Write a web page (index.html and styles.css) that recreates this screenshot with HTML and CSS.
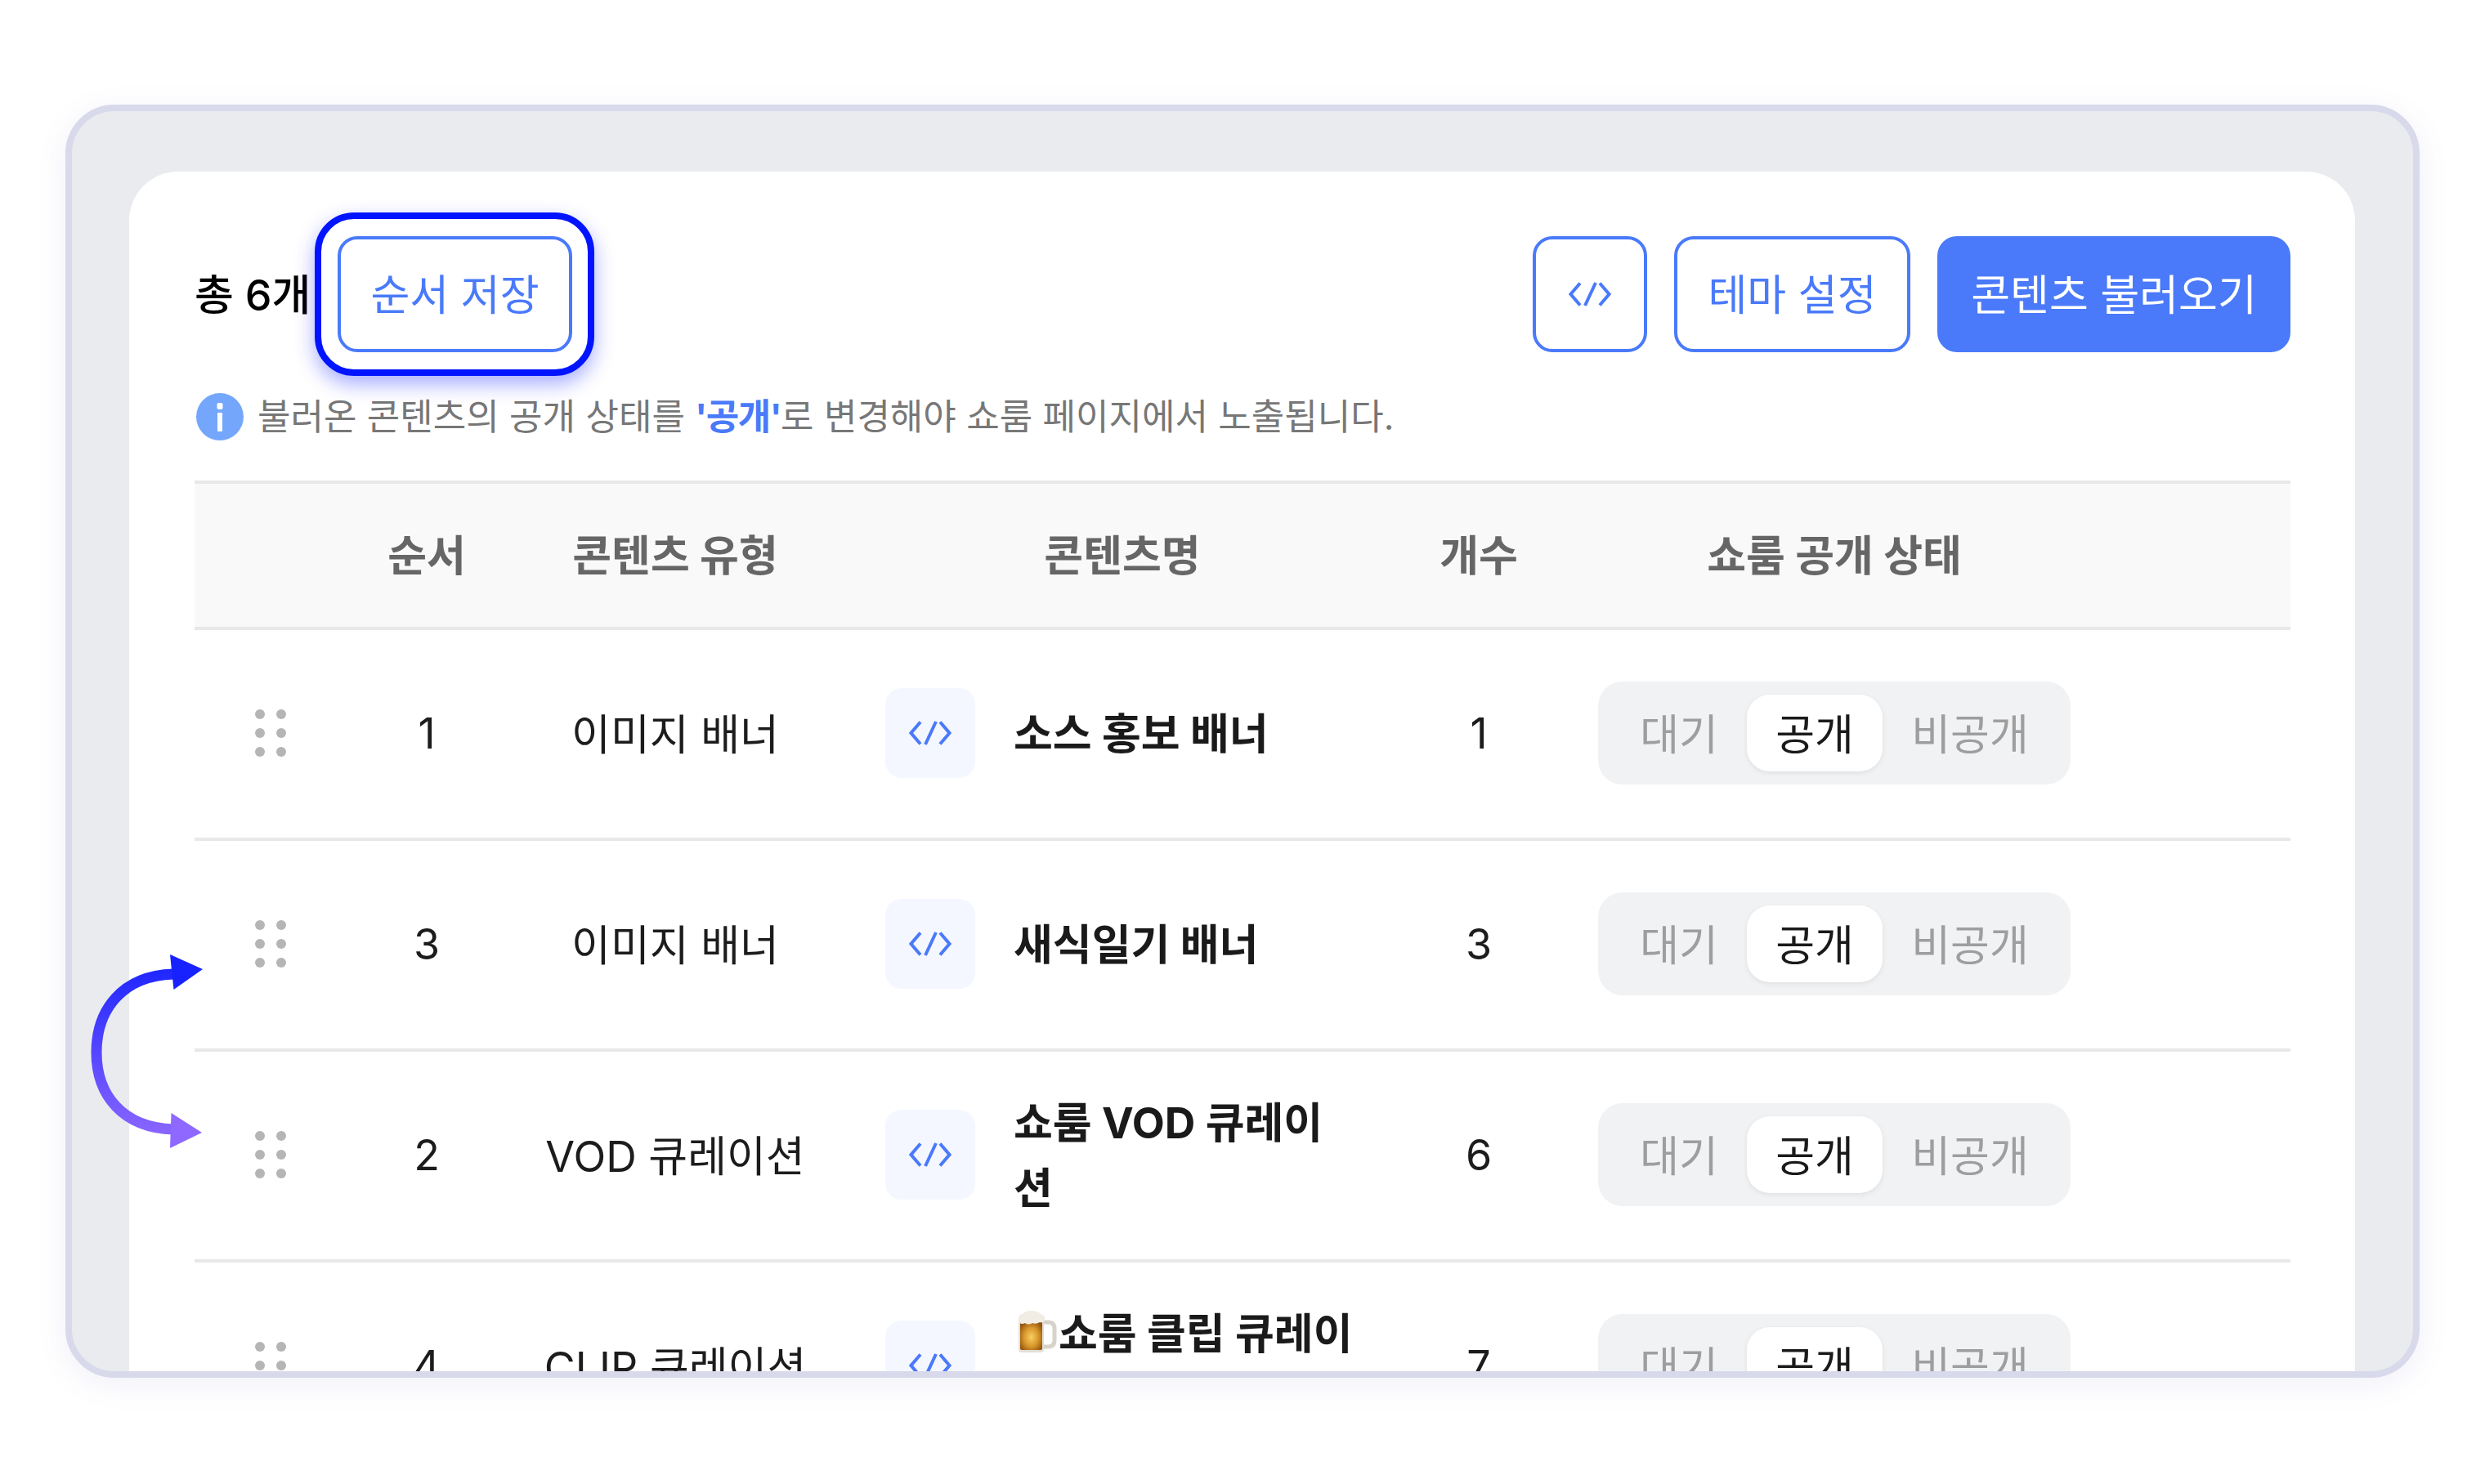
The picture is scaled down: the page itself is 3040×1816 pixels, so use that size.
FILE: index.html
```html
<!DOCTYPE html>
<html lang="ko">
<head>
<meta charset="utf-8">
<title>콘텐츠 목록</title>
<link rel="stylesheet" href="styles.css">
</head>
<body>
<svg width="0" height="0" class="defs">
  <symbol id="code" viewBox="0 0 52 30">
    <path d="M14 1.5 2.5 15 14 28.5M33 1 20 29M38 1.5 49.5 15 38 28.5" fill="none" stroke="currentColor" stroke-width="4"/>
  </symbol>
  <symbol id="grip" viewBox="0 0 38 58">
    <circle cx="6" cy="6" r="6"/><circle cx="32" cy="6" r="6"/>
    <circle cx="6" cy="29" r="6"/><circle cx="32" cy="29" r="6"/>
    <circle cx="6" cy="52" r="6"/><circle cx="32" cy="52" r="6"/>
  </symbol>
</svg>
<div class="page">
  <div class="frame">
    <div class="card">
      <div class="toolbar">
        <div class="toolbar-left">
          <span class="total">총 6개</span>
          <div class="save-wrap">
            <button class="btn btn-outline save">순서 저장</button>
            <span class="ring"></span>
          </div>
        </div>
        <div class="toolbar-right">
          <button class="btn btn-outline btn-icon"><svg class="code-icon"><use href="#code"/></svg></button>
          <button class="btn btn-outline theme">테마 설정</button>
          <button class="btn btn-solid load">콘텐츠 불러오기</button>
        </div>
      </div>
      <p class="notice">
        <svg class="info" viewBox="0 0 58 58"><circle cx="29" cy="29" r="29" fill="#74a7fb"/><rect x="25.500" y="12" width="7" height="8" rx="2" fill="#fff"/><rect x="26" y="24" width="6" height="23" rx="1" fill="#fff"/></svg>
        <span>불러온 콘텐츠의 공개 상태를 <b class="hl">'공개'</b>로 변경해야 쇼룸 페이지에서 노출됩니다.</span>
      </p>
      <div class="table">
        <div class="row head">
          <div></div><div class="cell">순서</div><div class="cell">콘텐츠 유형</div><div class="cell">콘텐츠명</div><div class="cell">개수</div><div class="cell">쇼룸 공개 상태</div><div></div>
        </div>
        <div class="row">
          <div class="slot"><svg class="grip"><use href="#grip"/></svg></div>
          <div class="cell num">1</div><div class="cell">이미지 배너</div>
          <div class="name-cell"><span class="tile"><svg class="code-icon"><use href="#code"/></svg></span><span class="name">소스 홍보 배너</span></div>
          <div class="cell num">1</div>
          <div class="slot"><div class="toggle"><span class="opt opt-a">대기</span><span class="opt on">공개</span><span class="opt opt-c">비공개</span></div></div><div></div>
        </div>
        <div class="row">
          <div class="slot"><svg class="grip"><use href="#grip"/></svg></div>
          <div class="cell num">3</div><div class="cell">이미지 배너</div>
          <div class="name-cell"><span class="tile"><svg class="code-icon"><use href="#code"/></svg></span><span class="name">새식일기 배너</span></div>
          <div class="cell num">3</div>
          <div class="slot"><div class="toggle"><span class="opt opt-a">대기</span><span class="opt on">공개</span><span class="opt opt-c">비공개</span></div></div><div></div>
        </div>
        <div class="row">
          <div class="slot"><svg class="grip"><use href="#grip"/></svg></div>
          <div class="cell num">2</div><div class="cell">VOD 큐레이션</div>
          <div class="name-cell"><span class="tile"><svg class="code-icon"><use href="#code"/></svg></span><span class="name">쇼룸 VOD 큐레이션</span></div>
          <div class="cell num">6</div>
          <div class="slot"><div class="toggle"><span class="opt opt-a">대기</span><span class="opt on">공개</span><span class="opt opt-c">비공개</span></div></div><div></div>
        </div>
        <div class="row">
          <div class="slot"><svg class="grip"><use href="#grip"/></svg></div>
          <div class="cell num">4</div><div class="cell">CLIP 큐레이션</div>
          <div class="name-cell"><span class="tile"><svg class="code-icon"><use href="#code"/></svg></span><span class="name"><svg class="beer" viewBox="0 0 50 52">
            <defs><radialGradient id="ale" cx=".5" cy=".55" r=".6"><stop offset="0" stop-color="#f7cf62"/><stop offset=".55" stop-color="#d8962c"/><stop offset="1" stop-color="#94560f"/></radialGradient></defs>
            <path d="M33 14h6q8 0 8 8v14q0 8-8 8h-6" fill="none" stroke="#d8d3c9" stroke-width="5"/>
            <rect x="3" y="6" width="31" height="45" rx="4" fill="#e3dfd6"/>
            <rect x="5" y="13" width="27" height="35" rx="2" fill="url(#ale)"/>
            <path d="M3 12q-2-7 5-8 3-4 10-4 9 0 12 4 6 1 5 7-1 4-6 3-5 3-9 1-5 3-9 0-6 3-8-3z" fill="#f1ede4"/>
          </svg>쇼룸 클립 큐레이션</span></div>
          <div class="cell num">7</div>
          <div class="slot"><div class="toggle"><span class="opt opt-a">대기</span><span class="opt on">공개</span><span class="opt opt-c">비공개</span></div></div><div></div>
        </div>
      </div>
    </div>
  </div>
  <svg class="swap" viewBox="0 0 160 260" width="160" height="260">
    <defs><linearGradient id="sw" gradientUnits="userSpaceOnUse" x1="0" y1="10" x2="0" y2="240"><stop offset="0" stop-color="#1722ff"/><stop offset="1" stop-color="#9069ff"/></linearGradient></defs>
    <path d="M112 32C50 34 18 75 18 128 18 180 50 220 112 222" fill="none" stroke="url(#sw)" stroke-width="13"/>
    <path d="M148 26 108 8 112.500 51z" fill="#1722ff"/>
    <path d="M147 226 109.500 202 108 245z" fill="#8f68ff"/>
  </svg>
</div>
</body>
</html>
```
FILE: styles.css
```css
* { box-sizing: border-box; }
html, body { margin: 0; padding: 0; background: #fff; }
body {
  width: 3040px;
  height: 1816px;
  overflow: hidden;
  font-family: "Inter", "Noto Sans CJK KR", "Noto Sans", sans-serif;
  color: #1c1c1c;
  font-size: 52px;
}
.defs { position: absolute; }
.page { position: relative; padding: 128px 80px 0; }
.frame {
  height: 1558px;
  border: 8px solid #d8d9ea;
  border-radius: 60px;
  background: #eaebef;
  padding: 74px 71px 0 70px;
  overflow: hidden;
  box-shadow: 0 8px 36px rgba(110, 110, 200, 0.1);
}
.card {
  background: #fff;
  border-radius: 60px 60px 0 0;
  padding: 79px 79px 0 80px;
  height: 1700px;
}
.toolbar { display: flex; justify-content: space-between; align-items: center; height: 142px; }
.toolbar-left { display: flex; align-items: center; }
.total { width: 175px; padding-bottom: 6px; color: #000; font-weight: 500; white-space: nowrap; }
.save-wrap { position: relative; }
.toolbar-right { display: flex; gap: 33px; }
.btn {
  height: 142px;
  border-radius: 24px;
  font: inherit;
  padding: 0 0 6px;
  display: flex;
  align-items: center;
  justify-content: center;
  white-space: nowrap;
}
.btn-outline { background: #fff; border: 4px solid #4a7afa; color: #4a7afa; }
.btn-solid { background: #4a7afa; border: 0; color: #fff; }
.save { width: 287px; }
.btn-icon { width: 140px; padding: 0; }
.theme { width: 289px; }
.load { width: 432px; }
.ring {
  position: absolute;
  inset: -29px -27px -29px -28px;
  border: 8px solid #0014ff;
  border-radius: 48px;
  box-shadow: 0 10px 24px rgba(0, 20, 255, 0.35);
  pointer-events: none;
}
.code-icon { width: 52px; height: 30px; color: #4a7afa; display: block; }
.notice {
  margin: 0;
  height: 157px;
  padding: 50px 0 0 2px;
  display: flex;
  align-items: flex-start;
  gap: 17px;
  font-size: 44px;
  line-height: 58px;
  color: #777;
  white-space: nowrap;
}
.info { width: 58px; height: 58px; flex: none; }
.hl { color: #4a7afa; font-weight: 700; letter-spacing: -1.5px; }
.table { border-top: 4px solid #e8e8e8; }
.row {
  display: grid;
  grid-template-columns: 186px 196px 412px 682px 190px 680px 218px;
  height: 258px;
  border-bottom: 4px solid #e8e8e8;
}
.head {
  height: 179px;
  background: #f9f9f9;
  color: #666;
  font-weight: 700;
}
.cell { display: flex; align-items: center; justify-content: center; text-align: center; padding-bottom: 6px; }
.cell.num { padding-bottom: 2px; }
.slot { display: flex; align-items: center; justify-content: center; padding-bottom: 2px; }
.grip { width: 38px; height: 58px; fill: #b5b5b5; display: block; }
.name-cell { display: flex; align-items: center; gap: 47px; padding: 0 0 2px 51px; }
.tile {
  width: 110px;
  height: 110px;
  flex: none;
  border-radius: 20px;
  background: #f4f7ff;
  display: flex;
  align-items: center;
  justify-content: center;
}
.name { width: 418px; line-height: 80px; font-weight: 700; color: #1a1a1a; padding-top: 4px; }
.beer { width: 50px; height: 52px; vertical-align: -5px; margin-left: 3px; margin-right: 2px; }
.toggle {
  width: 578px;
  height: 126px;
  border-radius: 30px;
  background: #f1f2f4;
  display: flex;
  align-items: center;
  padding: 0 16px;
  color: #9e9e9e;
}
.opt { display: flex; align-items: center; justify-content: center; height: 94px; padding-bottom: 4px; }
.opt-a { width: 166px; }
.on {
  width: 166px;
  border-radius: 28px;
  background: #fff;
  color: #1a1a1a;
  box-shadow: 0 2px 6px rgba(0, 0, 0, 0.08);
}
.opt-c { flex: 1; }
.swap { position: absolute; left: 100px; top: 1160px; }
```
